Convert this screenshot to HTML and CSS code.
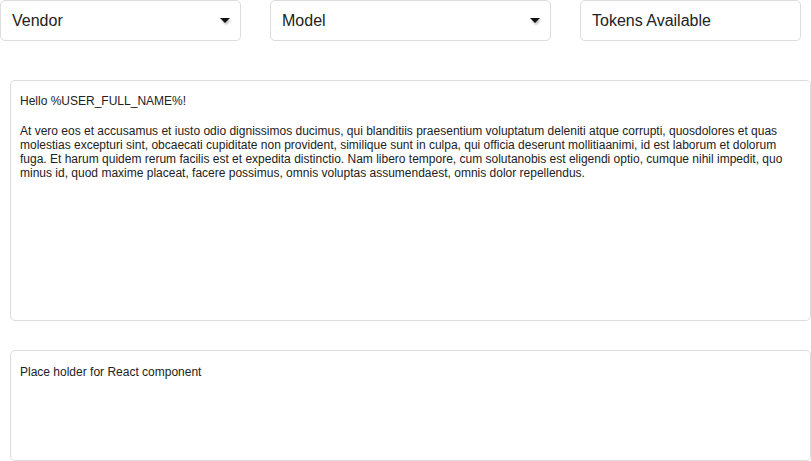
FILE: index.html
```html
<!DOCTYPE html>
<html>
<head>
<meta charset="utf-8">
<link rel="stylesheet" href="styles.css">
</head>
<body>
<div class="toolbar">
  <div class="field select vendor"><span>Vendor</span><span class="caret"></span></div>
  <div class="field select model"><span>Model</span><span class="caret"></span></div>
  <div class="field tokens"><span>Tokens Available</span></div>
</div>
<div class="content">
  <div class="panel editor">
    <p>Hello %USER_FULL_NAME%!</p>
    <p>At vero eos et accusamus et iusto odio dignissimos ducimus, qui blanditiis praesentium voluptatum deleniti atque corrupti, quosdolores et quas molestias excepturi sint, obcaecati cupiditate non provident, similique sunt in culpa, qui officia deserunt mollitiaanimi, id est laborum et dolorum fuga. Et harum quidem rerum facilis est et expedita distinctio. Nam libero tempore, cum solutanobis est eligendi optio, cumque nihil impedit, quo minus id, quod maxime placeat, facere possimus, omnis voluptas assumendaest, omnis dolor repellendus.</p>
  </div>
  <div class="panel placeholder">
    <p>Place holder for React component</p>
  </div>
</div>
</body>
</html>
```
FILE: styles.css
```css
html, body {
  margin: 0;
  padding: 0;
  background: #fff;
  font-family: "Liberation Sans", Arial, sans-serif;
  color: #222;
  overflow: hidden;
}
.toolbar {
  display: flex;
  gap: 29px;
  height: 41px;
}
.field {
  box-sizing: border-box;
  height: 41px;
  border: 1px solid #dcdcdc;
  border-radius: 5px;
  display: flex;
  align-items: center;
  justify-content: space-between;
  padding: 0 10px 0 11px;
  font-size: 16px;
  color: #222;
}
.vendor { width: 241px; }
.model { width: 281px; }
.tokens { width: 221px; }
.caret {
  width: 0;
  height: 0;
  border-left: 5px solid transparent;
  border-right: 5px solid transparent;
  border-top: 5px solid #111;
  margin-right: 0;
  filter: drop-shadow(1px 2px 1px rgba(0,0,0,0.25));
}
.content {
  padding: 39px 0 0 10px;
  display: flex;
  flex-direction: column;
  gap: 29px;
}
.panel {
  box-sizing: border-box;
  width: 801px;
  border: 1px solid #dcdcdc;
  border-radius: 5px;
  padding: 13px 10px 0 9px;
  font-size: 12px;
  line-height: 14px;
  color: #222;
}
.panel p {
  margin: 0 0 16px 0;
}
.editor { height: 241px; }
.placeholder { height: 111px; padding-top: 14px; }
```
